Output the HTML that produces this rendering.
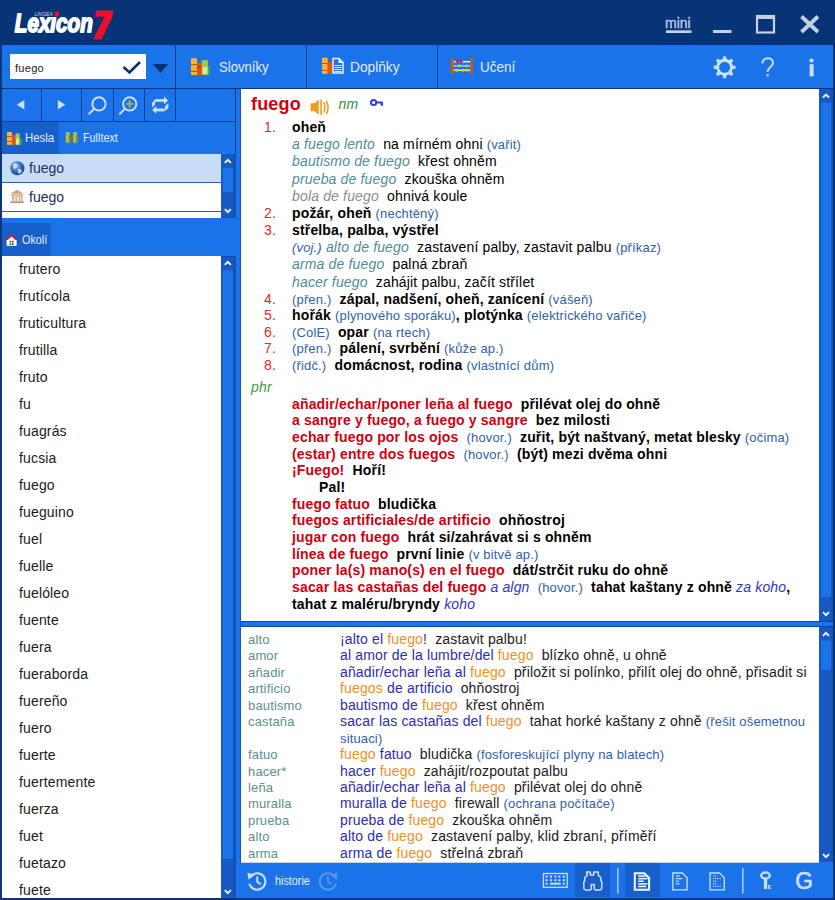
<!DOCTYPE html>
<html><head><meta charset="utf-8">
<style>
*{margin:0;padding:0;box-sizing:border-box}
html,body{width:835px;height:900px;overflow:hidden;background:#1a73e8;font-family:"Liberation Sans",sans-serif;position:relative}
.a{position:absolute}
.dk{position:absolute;background:#07367a}
.sb{position:absolute;background:#1659c4}
.th{position:absolute;background:#1a73e8}
.w{position:absolute;background:#fff;overflow:hidden}
.ln{position:absolute;white-space:nowrap;font-size:14px;line-height:17px;color:#000;letter-spacing:.16px}
.lo{position:absolute;white-space:nowrap;font-size:14px;line-height:16px;color:#1a1a1a;letter-spacing:.15px}
.wl{position:absolute;white-space:nowrap;font-size:14px;line-height:27px;color:#1a1a1a;left:17px;letter-spacing:.15px}
.tt{position:absolute;white-space:nowrap;color:#e4ecfb}
.r{color:#d0000e}
.num{color:#de2a2a}
.b{font-weight:bold}
.te{color:#4e8c98;font-style:italic}
.gi{color:#8c8c8c;font-style:italic}
.bl{color:#2f5fa8;font-size:13px}
.gr{color:#3c9a3c;font-style:italic}
.ind{color:#3434c4;font-style:italic}
.hw{color:#5a9090}
.ph{color:#2c2cb0}
.or{color:#f0901c}
.nt{color:#2f5ea8;font-size:13px}
</style></head><body>
<div class="a" style="left:0;top:0;width:835px;height:45px;background:#073377"></div>
<div class="dk" style="left:0;top:44px;width:2px;height:856px"></div>
<div class="dk" style="left:833px;top:44px;width:2px;height:856px"></div>
<div class="dk" style="left:0;top:898px;width:835px;height:2px"></div>
<div class="dk" style="left:0;top:88px;width:835px;height:1px"></div>
<div class="w" style="left:2px;top:256px;width:219px;height:642px">
<div class="wl" style="top:0px">frutero</div>
<div class="wl" style="top:27px">frutícola</div>
<div class="wl" style="top:54px">fruticultura</div>
<div class="wl" style="top:81px">frutilla</div>
<div class="wl" style="top:108px">fruto</div>
<div class="wl" style="top:135px">fu</div>
<div class="wl" style="top:162px">fuagrás</div>
<div class="wl" style="top:189px">fucsia</div>
<div class="wl" style="top:216px">fuego</div>
<div class="wl" style="top:243px">fueguino</div>
<div class="wl" style="top:270px">fuel</div>
<div class="wl" style="top:297px">fuelle</div>
<div class="wl" style="top:324px">fuelóleo</div>
<div class="wl" style="top:351px">fuente</div>
<div class="wl" style="top:378px">fuera</div>
<div class="wl" style="top:405px">fueraborda</div>
<div class="wl" style="top:432px">fuereño</div>
<div class="wl" style="top:459px">fuero</div>
<div class="wl" style="top:486px">fuerte</div>
<div class="wl" style="top:513px">fuertemente</div>
<div class="wl" style="top:540px">fuerza</div>
<div class="wl" style="top:567px">fuet</div>
<div class="wl" style="top:594px">fuetazo</div>
<div class="wl" style="top:621px">fuete</div>
</div>

<div class="a" style="left:240px;top:89px;width:1px;height:774px;background:#1456b8"></div>
<div class="w" id="main" style="left:241px;top:89px;width:578px;height:532px">
<div class="ln" style="left:10px;top:7.26px"><span class="r b" style="font-size:18px">fuego</span></div>
<div class="ln" style="left:97.5px;top:6.94px"><span class="gr" style="color:#2e9440">nm</span></div>
<svg class="a" style="left:68px;top:9px" width="80" height="30" viewBox="309 98 80 30"><path d="M310.6,103.2 h4.1 l4,-3.6 v15.3 l-4,-3.6 h-4.1 z" fill="#f09a1c"/><rect x="320.3" y="99.6" width="1.6" height="15.3" fill="#f09a1c"/><path d="M323.6,102.2 q2.6,5 0,10.2 M326.2,100.8 q4,6.6 0,13" fill="none" stroke="#f09a1c" stroke-width="1.5"/><circle cx="373.6" cy="102.5" r="2.6" fill="none" stroke="#2a3ee0" stroke-width="2"/><rect x="375.8" y="101.5" width="7" height="2" fill="#2a3ee0"/><rect x="380.6" y="103" width="2.3" height="2.8" fill="#2a3ee0"/></svg>
<div class="ln" style="left:23px;top:29.94px"><span class="num">1.</span></div>
<div class="ln" style="left:51px;top:29.94px"><span class="b">oheň</span></div>
<div class="ln" style="left:51px;top:47.14px"><span class="te">a fuego lento</span>&nbsp; na mírném ohni <span class="bl">(vařit)</span></div>
<div class="ln" style="left:51px;top:64.34px"><span class="te">bautismo de fuego</span>&nbsp; křest ohněm</div>
<div class="ln" style="left:51px;top:81.54px"><span class="te">prueba de fuego</span>&nbsp; zkouška ohněm</div>
<div class="ln" style="left:51px;top:98.74px"><span class="gi">bola de fuego</span>&nbsp; ohnivá koule</div>
<div class="ln" style="left:23px;top:115.94px"><span class="num">2.</span></div>
<div class="ln" style="left:51px;top:115.94px"><span class="b">požár, oheň</span> <span class="bl">(nechtěný)</span></div>
<div class="ln" style="left:23px;top:133.12px"><span class="num">3.</span></div>
<div class="ln" style="left:51px;top:133.12px"><span class="b">střelba, palba, výstřel</span></div>
<div class="ln" style="left:51px;top:150.30px"><span class="bl" style="font-style:italic">(voj.)</span> <span class="te">alto de fuego</span>&nbsp; zastavení palby, zastavit palbu <span class="bl">(příkaz)</span></div>
<div class="ln" style="left:51px;top:167.48px"><span class="te">arma de fuego</span>&nbsp; palná zbraň</div>
<div class="ln" style="left:51px;top:184.66px"><span class="te">hacer fuego</span>&nbsp; zahájit palbu, začít střílet</div>
<div class="ln" style="left:23px;top:201.84px"><span class="num">4.</span></div>
<div class="ln" style="left:51px;top:201.84px"><span class="bl">(přen.)</span>&nbsp; <span class="b">zápal, nadšení, oheň, zanícení</span> <span class="bl">(vášeň)</span></div>
<div class="ln" style="left:23px;top:218.34px"><span class="num">5.</span></div>
<div class="ln" style="left:51px;top:218.34px"><span class="b">hořák</span> <span class="bl">(plynového sporáku)</span><span class="b">, plotýnka</span> <span class="bl">(elektrického vařiče)</span></div>
<div class="ln" style="left:23px;top:234.84px"><span class="num">6.</span></div>
<div class="ln" style="left:51px;top:234.84px"><span class="bl">(ColE)</span>&nbsp; <span class="b">opar</span> <span class="bl">(na rtech)</span></div>
<div class="ln" style="left:23px;top:251.34px"><span class="num">7.</span></div>
<div class="ln" style="left:51px;top:251.34px"><span class="bl">(přen.)</span>&nbsp; <span class="b">pálení, svrbění</span> <span class="bl">(kůže ap.)</span></div>
<div class="ln" style="left:23px;top:267.84px"><span class="num">8.</span></div>
<div class="ln" style="left:51px;top:267.84px"><span class="bl">(řidč.)</span>&nbsp; <span class="b">domácnost, rodina</span> <span class="bl">(vlastnící dům)</span></div>
<div class="ln" style="left:10px;top:289.94px"><span class="gr">phr</span></div>
<div class="ln" style="left:51px;top:306.64px"><span class="r b">añadir/echar/poner leña al fuego</span>&nbsp; <span class="b">přilévat olej do ohně</span></div>
<div class="ln" style="left:51px;top:323.31px"><span class="r b">a sangre y fuego, a fuego y sangre</span>&nbsp; <span class="b">bez milosti</span></div>
<div class="ln" style="left:51px;top:339.98px"><span class="r b">echar fuego por los ojos</span>&nbsp; <span class="bl">(hovor.)</span>&nbsp; <span class="b">zuřit, být naštvaný, metat blesky</span> <span class="bl">(očima)</span></div>
<div class="ln" style="left:51px;top:356.65px"><span class="r b">(estar) entre dos fuegos</span>&nbsp; <span class="bl">(hovor.)</span>&nbsp; <span class="b">(být) mezi dvěma ohni</span></div>
<div class="ln" style="left:51px;top:373.32px"><span class="r b">¡Fuego!</span>&nbsp; <span class="b">Hoří!</span></div>
<div class="ln" style="left:78px;top:389.99px"><span class="b">Pal!</span></div>
<div class="ln" style="left:51px;top:406.66px"><span class="r b">fuego fatuo</span>&nbsp; <span class="b">bludička</span></div>
<div class="ln" style="left:51px;top:423.33px"><span class="r b">fuegos artificiales/de artificio</span>&nbsp; <span class="b">ohňostroj</span></div>
<div class="ln" style="left:51px;top:440.00px"><span class="r b">jugar con fuego</span>&nbsp; <span class="b">hrát si/zahrávat si s ohněm</span></div>
<div class="ln" style="left:51px;top:456.67px"><span class="r b">línea de fuego</span>&nbsp; <span class="b">první linie</span> <span class="bl">(v bitvě ap.)</span></div>
<div class="ln" style="left:51px;top:473.34px"><span class="r b">poner la(s) mano(s) en el fuego</span>&nbsp; <span class="b">dát/strčit ruku do ohně</span></div>
<div class="ln" style="left:51px;top:490.01px"><span class="r b">sacar las castañas del fuego</span> <span class="ind">a algn</span>&nbsp; <span class="bl">(hovor.)</span>&nbsp; <span class="b">tahat kaštany z ohně</span> <span class="ind">za koho</span><span class="b">,</span></div>
<div class="ln" style="left:51px;top:506.68px"><span class="b">tahat z maléru/bryndy</span> <span class="ind">koho</span></div>
</div>
<div class="sb" style="left:819px;top:89px;width:14px;height:531px"></div>
<div class="a" style="left:241px;top:621px;width:592px;height:1px;background:#0e46a0"></div>
<div class="a" style="left:241px;top:626px;width:592px;height:1px;background:#0e46a0"></div>
<div class="w" id="lower" style="left:241px;top:627px;width:578px;height:235px">
<div class="lo" style="left:7px;top:3.84px"><span class="hw" style="font-size:13px">alto</span></div>
<div class="lo" style="left:99px;top:3.84px"><span class="ph">¡alto el </span><span class="or">fuego</span><span class="ph">!</span>&nbsp; zastavit palbu!</div>
<div class="lo" style="left:7px;top:20.30px"><span class="hw" style="font-size:13px">amor</span></div>
<div class="lo" style="left:99px;top:20.30px"><span class="ph">al amor de la lumbre/del </span><span class="or">fuego</span>&nbsp; blízko ohně, u ohně</div>
<div class="lo" style="left:7px;top:36.76px"><span class="hw" style="font-size:13px">añadir</span></div>
<div class="lo" style="left:99px;top:36.76px"><span class="ph">añadir/echar leña al </span><span class="or">fuego</span>&nbsp; přiložit si polínko, přilít olej do ohně, přisadit si</div>
<div class="lo" style="left:7px;top:53.22px"><span class="hw" style="font-size:13px">artificio</span></div>
<div class="lo" style="left:99px;top:53.22px"><span class="or">fuegos</span><span class="ph"> de artificio</span>&nbsp; ohňostroj</div>
<div class="lo" style="left:7px;top:69.68px"><span class="hw" style="font-size:13px">bautismo</span></div>
<div class="lo" style="left:99px;top:69.68px"><span class="ph">bautismo de </span><span class="or">fuego</span>&nbsp; křest ohněm</div>
<div class="lo" style="left:7px;top:86.14px"><span class="hw" style="font-size:13px">castaña</span></div>
<div class="lo" style="left:99px;top:86.14px"><span class="ph">sacar las castañas del </span><span class="or">fuego</span>&nbsp; tahat horké kaštany z ohně <span class="nt">(řešit ošemetnou</span></div>
<div class="lo" style="left:99px;top:102.60px"><span class="nt">situaci)</span></div>
<div class="lo" style="left:7px;top:119.06px"><span class="hw" style="font-size:13px">fatuo</span></div>
<div class="lo" style="left:99px;top:119.06px"><span class="or">fuego</span><span class="ph"> fatuo</span>&nbsp; bludička <span class="nt">(fosforeskující plyny na blatech)</span></div>
<div class="lo" style="left:7px;top:135.52px"><span class="hw" style="font-size:13px">hacer*</span></div>
<div class="lo" style="left:99px;top:135.52px"><span class="ph">hacer </span><span class="or">fuego</span>&nbsp; zahájit/rozpoutat palbu</div>
<div class="lo" style="left:7px;top:151.98px"><span class="hw" style="font-size:13px">leña</span></div>
<div class="lo" style="left:99px;top:151.98px"><span class="ph">añadir/echar leña al </span><span class="or">fuego</span>&nbsp; přilévat olej do ohně</div>
<div class="lo" style="left:7px;top:168.44px"><span class="hw" style="font-size:13px">muralla</span></div>
<div class="lo" style="left:99px;top:168.44px"><span class="ph">muralla de </span><span class="or">fuego</span>&nbsp; firewall <span class="nt">(ochrana počítače)</span></div>
<div class="lo" style="left:7px;top:184.90px"><span class="hw" style="font-size:13px">prueba</span></div>
<div class="lo" style="left:99px;top:184.90px"><span class="ph">prueba de </span><span class="or">fuego</span>&nbsp; zkouška ohněm</div>
<div class="lo" style="left:7px;top:201.36px"><span class="hw" style="font-size:13px">alto</span></div>
<div class="lo" style="left:99px;top:201.36px"><span class="ph">alto de </span><span class="or">fuego</span>&nbsp; zastavení palby, klid zbraní, příměří</div>
<div class="lo" style="left:7px;top:217.82px"><span class="hw" style="font-size:13px">arma</span></div>
<div class="lo" style="left:99px;top:217.82px"><span class="ph">arma de </span><span class="or">fuego</span>&nbsp; střelná zbraň</div>
</div>
<div class="sb" style="left:819px;top:627px;width:14px;height:235px"></div>
<svg class="a" style="left:0;top:0" width="835" height="45" viewBox="0 0 835 45">
<text x="14.8" y="32.4" font-family="Liberation Sans" font-weight="bold" font-style="italic" font-size="26.3" fill="#fff" stroke="#fff" stroke-width="1.8" stroke-linejoin="round" textLength="78" lengthAdjust="spacingAndGlyphs">Lexıcon</text>
<text x="34.5" y="15.8" font-family="Liberation Sans" font-style="italic" font-size="5.5" fill="#c9d3e6" textLength="18" lengthAdjust="spacingAndGlyphs">LINGEA</text>
<circle cx="56.8" cy="14" r="2.5" fill="#e8102a"/>
<polygon points="96,10.5 113.5,10.5 112.5,16.8 101.5,39.5 93,39.5 104.5,16.8 95,16.8" fill="#e8102a"/>
<text x="665" y="28" font-family="Liberation Sans" font-size="14" fill="#c3cfe2" stroke="#c3cfe2" stroke-width="0.3">mini</text>
<rect x="666" y="30.3" width="25.5" height="2.7" fill="#c3cfe2"/>
<rect x="713" y="30" width="18.5" height="3" fill="#c3cfe2"/>
<rect x="757" y="16" width="17" height="16.5" fill="none" stroke="#c3cfe2" stroke-width="2.2"/>
<rect x="756" y="15" width="19" height="4" fill="#c3cfe2"/>
<path d="M801.5,16.5 L818,32 M818,16.5 L801.5,32" stroke="#c3cfe2" stroke-width="3.8"/>
</svg>
<div class="a" style="left:10px;top:54px;width:136px;height:25px;background:#fff"></div>
<div class="a" style="left:15px;top:61px;font-size:11px;line-height:14px;color:#1a1a1a;letter-spacing:.3px">fuego</div>
<svg class="a" style="left:0;top:44px" width="835" height="45" viewBox="0 44 835 45">
<polyline points="123.5,67 129.5,72.5 140,62" fill="none" stroke="#0b3072" stroke-width="2.6"/>
<polygon points="153,64 168,64 160.5,73" fill="#0b3072"/>
<rect x="175" y="44" width="1" height="44" fill="#0c3f8a"/>
<rect x="306" y="44" width="1" height="44" fill="#0c3f8a"/>
<rect x="437" y="44" width="1" height="44" fill="#0c3f8a"/>
<!-- slovniky books -->
<rect x="191" y="58.2" width="6" height="16.8" fill="#fdb03c"/>
<rect x="191" y="64" width="6" height="1.2" fill="#b5640e"/>
<rect x="191" y="70.8" width="6" height="1.2" fill="#b5640e"/>
<rect x="197" y="62.8" width="4.7" height="12.2" fill="#e8500c"/>
<rect x="197" y="66.5" width="4.7" height="1" fill="#a83a06"/>
<rect x="201.7" y="60.1" width="6.2" height="14.9" fill="#a8c84c"/>
<rect x="202.5" y="67" width="4.8" height="7" fill="#d9e8a0"/>
<rect x="208" y="66" width="1.8" height="9" fill="#38b050"/>
<!-- doplnky -->
<rect x="322" y="57.7" width="5.7" height="16.1" fill="#fdb03c"/>
<rect x="322" y="63" width="5.7" height="1" fill="#b5640e"/>
<rect x="322" y="70" width="5.7" height="1" fill="#b5640e"/>
<rect x="327.7" y="62" width="4.6" height="11.8" fill="#e8500c"/>
<path d="M333,58.5 L339,58.5 L343,62.5 L343,73 L333,73 Z" fill="none" stroke="#e8f0fc" stroke-width="1.5"/>
<path d="M338.5,58.5 L343,63 L338.5,63 Z" fill="#fff"/>
<rect x="334.5" y="65" width="7" height="1" fill="#e0ecfc"/>
<rect x="334.5" y="67" width="7" height="1" fill="#e0ecfc"/>
<rect x="334.5" y="69" width="7" height="1" fill="#e0ecfc"/>
<rect x="334.5" y="71" width="7" height="1" fill="#e0ecfc"/>
<!-- uceni abacus -->
<rect x="453" y="61" width="18" height="1.4" fill="#eef4fc"/>
<rect x="453" y="65.2" width="18" height="1.4" fill="#b8d4f4"/>
<rect x="453" y="69.6" width="18" height="1.4" fill="#eef4fc"/>
<rect x="451" y="58" width="2.8" height="16" fill="#d05a12"/>
<rect x="470.1" y="58" width="2.8" height="16" fill="#d05a12"/>
<ellipse cx="457.6" cy="61.6" rx="1.7" ry="1.4" fill="#e8102a"/>
<ellipse cx="461" cy="61.6" rx="1.7" ry="1.4" fill="#e8102a"/>
<ellipse cx="459.3" cy="65.9" rx="1.7" ry="1.3" fill="#b8d040"/>
<ellipse cx="466.3" cy="65.9" rx="1.7" ry="1.3" fill="#b8d040"/>
<ellipse cx="456.8" cy="70.3" rx="1.7" ry="1.4" fill="#ffd000"/>
<ellipse cx="462.8" cy="70.3" rx="1.7" ry="1.4" fill="#ffd000"/>
<ellipse cx="466.3" cy="70.3" rx="1.7" ry="1.4" fill="#ffd000"/>
<!-- gear -->
<g transform="translate(724.6,67.3)" fill="#cddff8">
<circle r="7" fill="none" stroke="#cddff8" stroke-width="2.9"/>
<rect x="-1.7" y="-10.9" width="3.4" height="3.4"/><rect x="-1.7" y="7.5" width="3.4" height="3.4"/>
<rect x="-10.9" y="-1.7" width="3.4" height="3.4"/><rect x="7.5" y="-1.7" width="3.4" height="3.4"/>
<g transform="rotate(45)"><rect x="-1.7" y="-10.9" width="3.4" height="3.4"/><rect x="-1.7" y="7.5" width="3.4" height="3.4"/>
<rect x="-10.9" y="-1.7" width="3.4" height="3.4"/><rect x="7.5" y="-1.7" width="3.4" height="3.4"/></g>
</g>
<path d="M762.5,63.5 C762.5,56.5 773,56.5 773,63 C773,67 767.5,67 767.5,72" fill="none" stroke="#cddff8" stroke-width="1.9"/>
<rect x="766.5" y="74.2" width="2.2" height="2.2" fill="#cddff8"/>
<circle cx="811.5" cy="60.5" r="2.1" fill="#cddff8"/>
<rect x="809.6" y="64.2" width="4" height="12.2" fill="#cddff8"/>
</svg>
<div class="tt" style="left:219px;top:58px;font-size:15px;line-height:18px;transform:scaleX(.875);transform-origin:0 0">Slovníky</div>
<div class="tt" style="left:349.5px;top:58px;font-size:15px;line-height:18px;transform:scaleX(.915);transform-origin:0 0">Doplňky</div>
<div class="tt" style="left:480px;top:58px;font-size:15px;line-height:18px;transform:scaleX(.9);transform-origin:0 0">Učení</div>
<svg class="a" style="left:0;top:89px" width="236" height="167" viewBox="0 89 236 167">
<rect x="2" y="121" width="233" height="1" fill="#0c3f8a"/>
<rect x="235" y="89" width="1" height="65" fill="#0c3f8a"/>
<rect x="41" y="89" width="1" height="32" fill="#0c3f8a"/>
<rect x="81" y="89" width="1" height="32" fill="#0c3f8a"/>
<rect x="113" y="89" width="1" height="32" fill="#0c3f8a"/>
<rect x="144" y="89" width="1" height="32" fill="#0c3f8a"/>
<rect x="175" y="89" width="1" height="32" fill="#0c3f8a"/>
<polygon points="16.8,104.7 24.4,100 24.4,109.5" fill="#cddff8"/>
<polygon points="65.3,104.7 57.8,100 57.8,109.5" fill="#cddff8"/>
<circle cx="99" cy="103.9" r="6.6" fill="none" stroke="#cddff8" stroke-width="1.9"/>
<path d="M94.2,108.8 L88.6,114.4" stroke="#cddff8" stroke-width="2"/>
<circle cx="129.7" cy="103.9" r="6.6" fill="none" stroke="#cddff8" stroke-width="1.9"/>
<path d="M124.9,108.8 L119.3,114.4" stroke="#cddff8" stroke-width="2"/>
<path d="M129.7,100.3 V107.5 M126.1,103.9 H133.3" stroke="#94c050" stroke-width="1.9"/>
<g fill="#cddff8">
<rect x="155.2" y="99.1" width="9.2" height="2.7"/>
<polygon points="164,96.5 168,100.45 164,104.4"/>
<polygon points="152,102.9 155.2,99.3 155.2,104.5 152,107.6"/>
<rect x="155.6" y="108.5" width="8.8" height="2.9"/>
<polygon points="156.2,106.1 152.2,109.95 156.2,113.8"/>
<polygon points="164.8,106.6 168.4,103 168.4,108 164.8,111.5"/>
</g>
<!-- tabs -->
<rect x="2" y="122" width="56.5" height="32" fill="#1760cc"/>
<rect x="7" y="132" width="5" height="12.8" fill="#fdb03c"/>
<rect x="7" y="136" width="5" height="1" fill="#b5640e"/>
<rect x="7" y="141" width="5" height="1" fill="#b5640e"/>
<rect x="12" y="135" width="3.5" height="9.8" fill="#e8500c"/>
<rect x="15.5" y="133.5" width="4.2" height="11.3" fill="#a8c84c"/>
<rect x="16" y="138.5" width="3.2" height="6" fill="#d9e8a0"/>
<rect x="20.2" y="138.5" width="1.6" height="6.3" fill="#38b050"/>
<!-- binoculars -->
<rect x="65.5" y="133" width="4.8" height="10.2" rx="1" fill="#8aa040"/>
<rect x="72.8" y="133" width="4.8" height="10.2" rx="1" fill="#8aa040"/>
<rect x="66.3" y="132.3" width="3.2" height="2" fill="#b8c870"/>
<rect x="73.6" y="132.3" width="3.2" height="2" fill="#b8c870"/>
<rect x="70" y="136" width="3.2" height="3.5" fill="#6a7a30"/>
<rect x="66.5" y="135" width="1.4" height="7" fill="#c0d080"/>
<rect x="73.8" y="135" width="1.4" height="7" fill="#c0d080"/>
<!-- okoli tab -->
<rect x="2" y="223" width="48.7" height="33" fill="#1760cc"/>
<polygon points="11.6,234.3 4.9,240.5 18.3,240.5" fill="#e01818"/>
<polygon points="11.6,236.6 7.2,240.6 16,240.6" fill="#fff"/>
<rect x="6.6" y="240" width="10" height="5.8" fill="#fff"/>
<rect x="9.6" y="240.8" width="1.6" height="1.6" fill="#333"/><rect x="12" y="240.8" width="1.6" height="1.6" fill="#333"/>
<rect x="9.6" y="243.2" width="1.6" height="1.6" fill="#333"/><rect x="12" y="243.2" width="1.6" height="1.6" fill="#333"/>
</svg>
<div class="tt" style="left:24.5px;top:131px;font-size:12px;line-height:14px;transform:scaleX(.95);transform-origin:0 0">Hesla</div>
<div class="tt" style="left:83px;top:131px;font-size:12px;line-height:14px;transform:scaleX(.9);transform-origin:0 0">Fulltext</div>
<div class="tt" style="left:22px;top:232.5px;font-size:12px;line-height:14px;transform:scaleX(.9);transform-origin:0 0">Okolí</div>
<div class="a" style="left:2px;top:154px;width:219px;height:64px;background:#fff"></div>
<div class="a" style="left:2px;top:154px;width:219px;height:28px;background:#c8dcf8"></div>
<div class="a" style="left:2px;top:182px;width:219px;height:1px;background:#2f5e9e"></div>
<div class="a" style="left:2px;top:211px;width:219px;height:1px;background:#2f5e9e"></div>
<div class="a" style="left:29px;top:154px;font-size:14px;line-height:28px;color:#17305a">fuego</div>
<div class="a" style="left:29px;top:183px;font-size:14px;line-height:28px;color:#17305a">fuego</div>
<svg class="a" style="left:0;top:154px" width="30" height="64" viewBox="0 154 30 64">
<defs><radialGradient id="gl" cx="0.4" cy="0.35" r="0.7"><stop offset="0" stop-color="#9cc4f0"/><stop offset="0.6" stop-color="#2a64b0"/><stop offset="1" stop-color="#123a80"/></radialGradient></defs>
<circle cx="17.4" cy="168.3" r="7" fill="url(#gl)"/>
<path d="M13,164 q2,-2 4,0 q1,3 -1,4 q-2,2 -3,-1z M18,169 q3,-1 4,2 q-1,3 -3,3 q-2,-2 -1,-5z" fill="#dbe8f8" opacity=".8"/>
<polygon points="17,189.7 10.4,193.8 23.8,193.8" fill="#c8a880"/>
<rect x="11.2" y="194.4" width="12" height="1.4" fill="#c8a880"/>
<rect x="12" y="196" width="2" height="5" fill="#d6b890"/><rect x="15.2" y="196" width="2" height="5" fill="#d6b890"/><rect x="18.4" y="196" width="2" height="5" fill="#d6b890"/><rect x="21" y="196" width="1.6" height="5" fill="#d6b890"/>
<rect x="10.4" y="201.3" width="13.4" height="1.8" fill="#b89870"/>
</svg>
<svg class="a" style="left:0;top:0" width="835" height="900" viewBox="0 0 835 900">
<rect x="221" y="154" width="15" height="64" fill="#1659c4"/>
<rect x="233" y="154" width="3" height="64" fill="#1452b4"/>
<rect x="222.8" y="168" width="10.2" height="24" fill="#1a73e8"/>
<path d="M224.8,162.8 L227.8,159.8 L230.8,162.8" fill="none" stroke="#eef4fd" stroke-width="1.9"/><path d="M224.8,209.2 L227.8,212.2 L230.8,209.2" fill="none" stroke="#eef4fd" stroke-width="1.9"/>
<rect x="221" y="256" width="15" height="642" fill="#1659c4"/>
<rect x="233" y="256" width="3" height="642" fill="#1452b4"/>
<rect x="221" y="256" width="15" height="1" fill="#0f4aa8"/>
<rect x="222.8" y="270.3" width="10.2" height="588.5" fill="#1a73e8"/>
<path d="M224.8,264.90000000000003 L227.8,261.90000000000003 L230.8,264.90000000000003" fill="none" stroke="#eef4fd" stroke-width="1.9"/><path d="M224.8,890.2 L227.8,893.2 L230.8,890.2" fill="none" stroke="#eef4fd" stroke-width="1.9"/>
<rect x="819" y="89" width="14" height="532" fill="#1659c4"/>
<rect x="831" y="89" width="2" height="532" fill="#1452b4"/>
<rect x="821" y="102.7" width="10.3" height="494.3" fill="#1a73e8"/>
<path d="M823,97.5 L826,94.5 L829,97.5" fill="none" stroke="#eef4fd" stroke-width="1.9"/><path d="M823,612.2 L826,615.2 L829,612.2" fill="none" stroke="#eef4fd" stroke-width="1.9"/>
<rect x="819" y="627" width="14" height="235" fill="#1659c4"/>
<rect x="831" y="627" width="2" height="235" fill="#1452b4"/>
<rect x="821" y="640.7" width="10.3" height="29.3" fill="#1a73e8"/>
<path d="M823,635.8 L826,632.8 L829,635.8" fill="none" stroke="#eef4fd" stroke-width="1.9"/><path d="M823,854.2 L826,857.2 L829,854.2" fill="none" stroke="#eef4fd" stroke-width="1.9"/>
</svg>
<svg class="a" style="left:236px;top:862px" width="597" height="36" viewBox="236 862 597 36">
<rect x="241" y="862" width="578" height="1" fill="#c8d4e4"/>
<!-- history -->
<g id="hist" transform="translate(257.2,881.3)">
<path d="M-6.2,-5.2 A8.2,8.2 0 1 1 -7.9,2.5" fill="none" stroke="#cddff8" stroke-width="2.1"/>
<polygon points="-9.8,-8.8 -2.6,-6.2 -8.6,-1.6" fill="#cddff8"/>
<path d="M0,-4.8 V0.4 L3.6,3" fill="none" stroke="#cddff8" stroke-width="1.9"/>
</g>
<g transform="translate(327.9,881.3) scale(-1,1)" opacity=".32">
<path d="M-6.2,-5.2 A8.2,8.2 0 1 1 -7.9,2.5" fill="none" stroke="#cddff8" stroke-width="2.1"/>
<polygon points="-9.8,-8.8 -2.6,-6.2 -8.6,-1.6" fill="#cddff8"/>
<path d="M0,-4.8 V0.4 L-3.6,3" fill="none" stroke="#cddff8" stroke-width="1.9"/>
</g>
<!-- keyboard -->
<rect x="543.4" y="873.5" width="23.8" height="13.8" fill="none" stroke="#cddff8" stroke-width="1.3"/>
<g fill="#cddff8">
<rect x="545.5" y="875.6" width="2" height="2"/><rect x="550" y="875.6" width="2" height="2"/><rect x="554.4" y="875.6" width="2" height="2"/><rect x="558.4" y="875.6" width="2" height="2"/><rect x="562.8" y="875.6" width="2" height="2"/>
<rect x="545.5" y="879.2" width="2" height="2"/><rect x="550" y="879.2" width="2" height="2"/><rect x="554.4" y="879.2" width="2" height="2"/><rect x="558.4" y="879.2" width="2" height="2"/><rect x="562.8" y="879.2" width="2" height="2"/>
<rect x="545.5" y="882.7" width="2" height="2"/><rect x="550" y="882.7" width="10.6" height="2"/><rect x="562.8" y="882.7" width="2" height="2"/>
</g>
<rect x="575" y="863" width="35" height="34" fill="#1760cc"/>
<path d="M586.5,872 h3.8 v3 h3.4 v-3 h4.6 v3.5 l2.5,2 v3 l1,1.5 v6.5 l-1.5,1.5 h-5 l-1,-1 v-4.5 h-3 v4.5 l-1,1 h-5 l-1.5,-1.5 v-6.5 l1,-1.5 v-3 l2.5,-2 z" fill="none" stroke="#cddff8" stroke-width="1.5" stroke-linejoin="round"/>
<rect x="617" y="868" width="1.6" height="25.5" fill="#a8c4f0"/>
<rect x="625" y="863" width="35" height="34" fill="#1760cc"/>
<path d="M634.8,873.2 h9.5 l4.8,4.8 v11.7 h-14.3 z" fill="none" stroke="#f4f8ff" stroke-width="2"/>
<g fill="#f4f8ff"><rect x="638.2" y="875.3" width="7.2" height="1.5"/><rect x="638.2" y="877.9" width="9.2" height="1.5"/><rect x="638.2" y="880.5" width="5.5" height="1.5"/><rect x="638.2" y="883.1" width="9.2" height="1.5"/><rect x="638.2" y="885.7" width="8" height="1.5"/></g>
<path d="M672.8,873 h9.5 l4.8,4.8 v12 h-14.3 z" fill="none" stroke="#cddff8" stroke-width="1.3"/>
<g fill="#cddff8"><rect x="675.7" y="875.4" width="4" height="1.2"/><rect x="675.7" y="878" width="6.6" height="1.2"/><rect x="675.7" y="880.6" width="3.4" height="1.2"/><rect x="675.7" y="883.2" width="4" height="1.2"/></g>
<path d="M710,873 h9.5 l4.8,4.8 v12 h-14.3 z" fill="none" stroke="#cddff8" stroke-width="1.3"/>
<g fill="#cddff8"><rect x="713" y="875.4" width="1.2" height="1.1"/><rect x="715" y="875.4" width="1.2" height="1.1"/>
<rect x="713" y="878" width="1.2" height="1.1"/><rect x="715" y="878" width="1.2" height="1.1"/><rect x="717" y="878" width="1.2" height="1.1"/><rect x="719.5" y="878" width="1.2" height="1.1"/>
<rect x="713" y="880.6" width="1.2" height="1.1"/><rect x="715" y="880.6" width="1.2" height="1.1"/>
<rect x="713" y="883.2" width="1.2" height="1.1"/><rect x="715" y="883.2" width="1.2" height="1.1"/>
<rect x="713" y="885.8" width="1.2" height="1.1"/><rect x="715" y="885.8" width="1.2" height="1.1"/><rect x="717" y="885.8" width="1.2" height="1.1"/><rect x="719.5" y="885.8" width="1.2" height="1.1"/></g>
<rect x="742" y="868" width="1.6" height="25.5" fill="#a8c4f0"/>
<ellipse cx="765.5" cy="875.5" rx="4.3" ry="3.1" fill="none" stroke="#cddff8" stroke-width="2.3"/>
<rect x="763.9" y="878.4" width="3.3" height="10.6" fill="#cddff8"/>
<path d="M771,885.5 h-2.4 v2.6 h2.4" fill="none" stroke="#cddff8" stroke-width="1.2"/>
<text x="795.3" y="888.8" font-family="Liberation Sans" font-size="23.8" fill="#cddff8" stroke="#cddff8" stroke-width="0.7" textLength="17.6" lengthAdjust="spacingAndGlyphs">G</text>
</svg>
<div class="tt" style="left:275px;top:873.5px;font-size:12px;line-height:14px;transform:scaleX(.9);transform-origin:0 0">historie</div>
</body></html>
